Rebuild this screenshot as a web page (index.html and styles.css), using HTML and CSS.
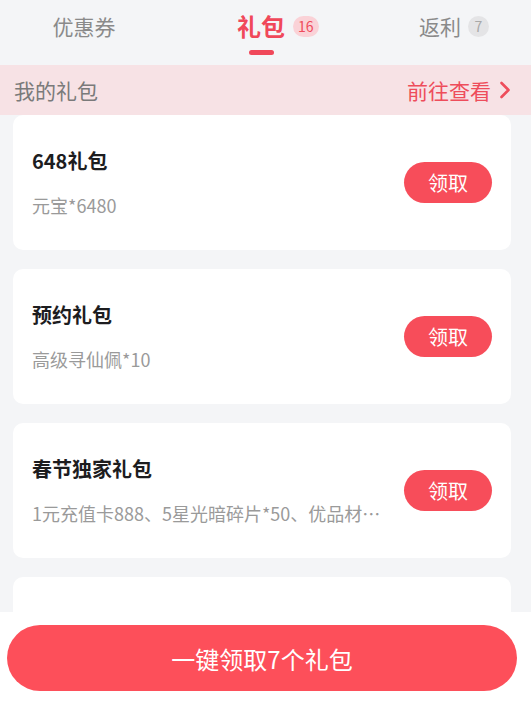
FILE: index.html
```html
<!DOCTYPE html>
<html lang="zh-CN">
<head>
<meta charset="utf-8">
<link rel="stylesheet" href="styles.css">
</head>
<body>
<div class="page">
  <nav class="tabs">
    <div class="tab"><span class="tab-label">优惠券</span></div>
    <div class="tab active"><span class="tab-label">礼包<span class="badge badge-red">16</span></span><span class="underline"></span></div>
    <div class="tab"><span class="tab-label">返利<span class="badge badge-grey">7</span></span></div>
  </nav>
  <div class="notice">
    <span class="notice-title">我的礼包</span>
    <span class="notice-link">前往查看
      <svg class="chev" width="12" height="18" viewBox="0 0 12 18"><path d="M2.5 2 L9.5 9 L2.5 16" fill="none" stroke="currentColor" stroke-width="2.6" stroke-linecap="round" stroke-linejoin="round"/></svg>
    </span>
  </div>
  <main class="list">
    <div class="card">
      <div class="info">
        <div class="title">648礼包</div>
        <div class="desc">元宝*6480</div>
      </div>
      <button class="get">领取</button>
    </div>
    <div class="card">
      <div class="info">
        <div class="title">预约礼包</div>
        <div class="desc">高级寻仙佩*10</div>
      </div>
      <button class="get">领取</button>
    </div>
    <div class="card">
      <div class="info">
        <div class="title">春节独家礼包</div>
        <div class="desc">1元充值卡888、5星光暗碎片*50、优品材料*20、高级强化石*30</div>
      </div>
      <button class="get">领取</button>
    </div>
    <div class="card">
      <div class="info">
        <div class="title">专属礼包</div>
        <div class="desc">元宝*888</div>
      </div>
      <button class="get">领取</button>
    </div>
  </main>
  <footer class="footer">
    <button class="all">一键领取7个礼包</button>
  </footer>
</div>
</body>
</html>
```

FILE: styles.css
```css
* { box-sizing: border-box; }
html, body { margin: 0; padding: 0; }
body {
  width: 531px;
  height: 704px;
  overflow: hidden;
  background: #f4f5f7;
  font-family: "Noto Sans CJK SC", "Noto Sans", sans-serif;
}
.page {
  height: 704px;
  display: flex;
  flex-direction: column;
}
.tabs {
  height: 65px;
  display: grid;
  grid-template-columns: 168px 186px 172px;
  background: #f4f5f7;
  flex: none;
}
.tab {
  position: relative;
  display: flex;
  justify-content: center;
  padding-top: 11px;
}
.tab-label {
  position: relative;
  font-size: 21px;
  line-height: 30px;
  height: 30px;
  color: #8a8a8a;
}
.tab.active .tab-label {
  font-size: 24px;
  font-weight: 700;
  color: #f0485a;
}
.underline {
  position: absolute;
  left: 50%;
  top: 50px;
  width: 25px;
  height: 5px;
  margin-left: -12px;
  border-radius: 3px;
  background: #f0485a;
}
.badge {
  position: absolute;
  left: 100%;
  top: 50%;
  margin-left: 8px;
  margin-top: -10px;
  height: 21px;
  min-width: 21px;
  padding: 0 5px;
  border-radius: 11px;
  font-size: 14px;
  font-weight: 400;
  line-height: 21px;
  text-align: center;
}
.badge-red {
  background: #fad2d7;
  color: #ef4b5c;
  margin-left: 8px;
}
.badge-grey {
  background: #e4e4e6;
  color: #a8a8a8;
  margin-left: 7px;
  padding: 0;
}
.notice {
  flex: none;
  height: 50px;
  background: #f7e2e5;
  display: flex;
  align-items: center;
  justify-content: space-between;
  padding: 0 20px 0 14px;
}
.notice-title {
  font-size: 21px;
  color: #7a7a7a;
}
.notice-link {
  display: flex;
  align-items: center;
  gap: 8px;
  font-size: 21px;
  color: #ee4d5b;
}
.chev { display: block; }
.list {
  flex: 1;
  min-height: 0;
  overflow: hidden;
  display: flex;
  flex-direction: column;
  gap: 19px;
  padding: 0 20px 0 13px;
}
.card {
  flex: none;
  height: 135px;
  background: #fff;
  border-radius: 10px;
  display: flex;
  align-items: center;
  justify-content: space-between;
  padding: 0 19px;
  gap: 14px;
}
.info {
  min-width: 0;
  flex: 1;
  display: flex;
  flex-direction: column;
  gap: 17px;
}
.title {
  font-size: 20px;
  font-weight: 700;
  color: #1d1d1f;
  line-height: 28px;
}
.desc {
  font-size: 18px;
  color: #9a9a9a;
  line-height: 26px;
  white-space: nowrap;
  overflow: hidden;
  text-overflow: ellipsis;
}
.get {
  flex: none;
  width: 88px;
  height: 41px;
  border: none;
  border-radius: 21px;
  background: #f74d5a;
  color: #fff;
  font-family: inherit;
  font-size: 20px;
  padding: 0;
}
.footer {
  flex: none;
  height: 92px;
  background: #fff;
  padding: 13px 14px 0 7px;
}
.all {
  width: 100%;
  height: 66px;
  border: none;
  border-radius: 33px;
  background: #fd4f5a;
  color: #fff;
  font-family: inherit;
  font-size: 24px;
  padding: 0;
}
```
